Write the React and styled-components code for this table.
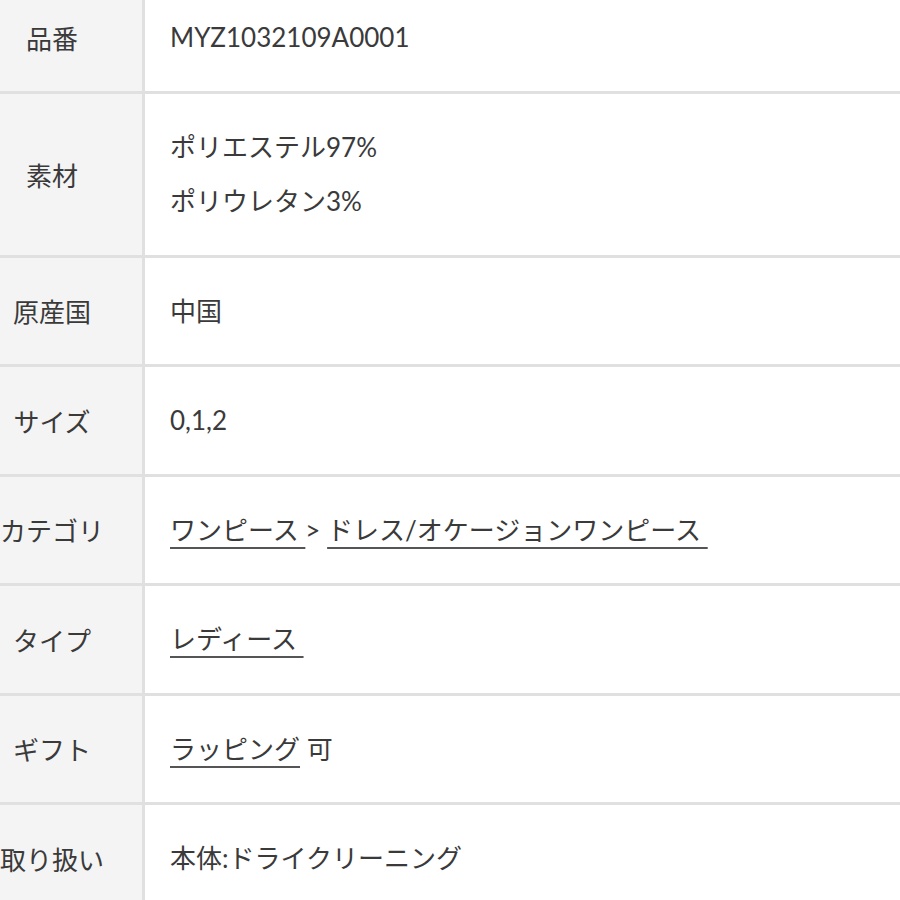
import React from "react";
import styled, { createGlobalStyle } from "styled-components";

const GlobalStyle = createGlobalStyle`
  html, body {
    margin: 0;
    padding: 0;
    background: #ffffff;
    overflow: hidden;
  }
  body {
    font-family: Lato, "Noto Sans CJK JP", sans-serif;
    color: #3a3a3a;
  }
`;

const Page = styled.div`
  width: 900px;
  height: 900px;
  overflow: hidden;
  background: #ffffff;
`;

const Table = styled.div`
  display: grid;
  grid-template-columns: 142px 1fr;
  column-gap: 3px;
  row-gap: 3px;
  margin-top: -16px;
  background: #e0e0e0;
`;

const Label = styled.div`
  height: ${({ $tall }) => ($tall ? "161px" : "106.5px")};
  display: flex;
  align-items: center;
  justify-content: center;
  padding-right: 38px;
  background: #f4f4f4;
  font-size: 26px;
  white-space: nowrap;
  color: #3a3a3a;
`;

const Cell = styled.div`
  height: ${({ $tall }) => ($tall ? "161px" : "106.5px")};
  display: flex;
  align-items: center;
  padding-left: 25px;
  background: #ffffff;
`;

const Lines = styled.div`
  display: flex;
  flex-direction: column;
  gap: 20px;
`;

const Value = styled.div`
  font-size: 26px;
  line-height: 34px;
  white-space: nowrap;
  color: #3a3a3a;
`;

const Link = styled.a`
  color: #3a3a3a;
  text-decoration: underline;
  text-decoration-thickness: 2px;
  text-underline-offset: 7px;
  text-decoration-color: #555555;
`;

function createRow(label, content, tall) {
  return { label, content, tall };
}

const rows = [
  createRow("品番", <Value>MYZ1032109A0001</Value>),
  createRow(
    "素材",
    <Lines>
      <Value>ポリエステル97%</Value>
      <Value>ポリウレタン3%</Value>
    </Lines>,
    true
  ),
  createRow("原産国", <Value>中国</Value>),
  createRow("サイズ", <Value>0,1,2</Value>),
  createRow(
    "カテゴリ",
    <Value>
      <Link href="#">ワンピース </Link> &gt;{" "}
      <Link href="#">ドレス/オケージョンワンピース&nbsp;</Link>
    </Value>
  ),
  createRow(
    "タイプ",
    <Value>
      <Link href="#">レディース&nbsp;</Link>
    </Value>
  ),
  createRow(
    "ギフト",
    <Value>
      <Link href="#">ラッピング</Link> 可
    </Value>
  ),
  createRow("取り扱い", <Value>本体:ドライクリーニング</Value>),
];

const App = () => {
  return (
    <Page>
      <GlobalStyle />
      <Table>
        {rows.map((row) => (
          <React.Fragment key={row.label}>
            <Label $tall={row.tall}>{row.label}</Label>
            <Cell $tall={row.tall}>{row.content}</Cell>
          </React.Fragment>
        ))}
      </Table>
    </Page>
  );
};

export default App;
